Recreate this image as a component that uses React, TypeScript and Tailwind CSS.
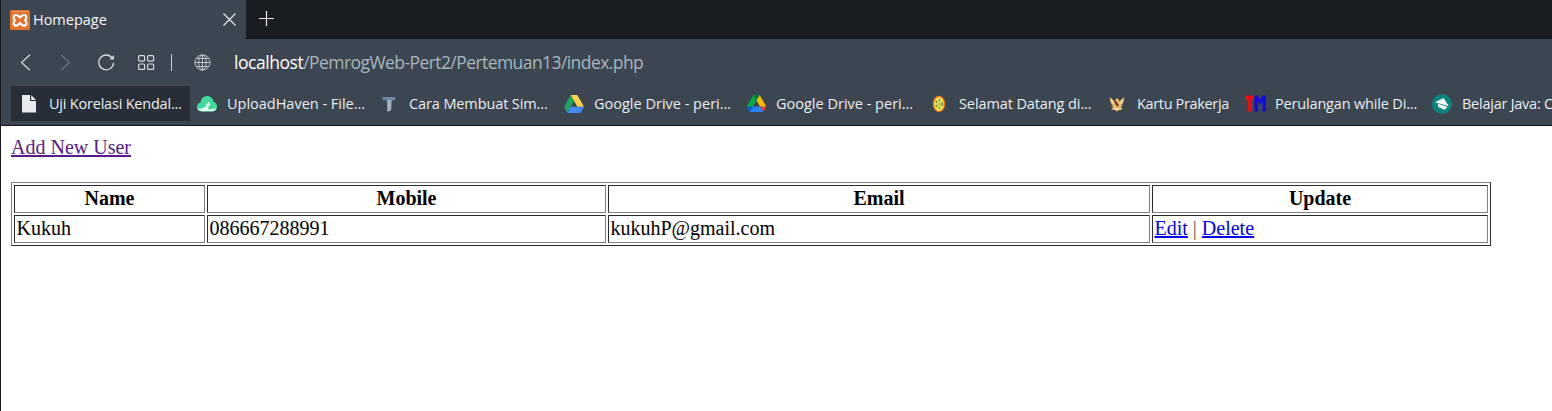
import type { ReactNode } from "react";

function XamppIcon() {
  return (
    <svg width="20" height="20" viewBox="0 0 20 20" fill="none">
      <rect width="20" height="20" rx="1.500" fill="#e2712d" />
      <path d="M2 1.800h16" stroke="#f0a878" strokeWidth=".8" />
      <path d="M6.300 5C4.600 5 3.600 6 3.600 7.400c0 1.200.8 1.800 1.300 2.900-.6 1-1.400 1.600-1.400 2.900 0 1.400 1.100 2.400 2.700 2.400 1.900 0 2.200-1.800 3.800-1.800s1.900 1.800 3.800 1.800c1.600 0 2.700-1 2.700-2.400 0-1.300-.8-1.900-1.400-2.900.5-1.100 1.300-1.700 1.300-2.900C16.400 6 15.400 5 13.700 5 12 5 11.700 6.800 10 6.800S8 5 6.300 5z" stroke="#fff" strokeWidth="2.100" />
      <path d="M10 6v2.800M10 11.800v2.800" stroke="#fff" strokeWidth="1.600" />
    </svg>
  );
}

function FileIcon() {
  return (
    <svg width="16" height="20" viewBox="0 0 16 20" fill="#e6eaec">
      <path d="M1 1h8v6h6v11.500H1zM10.200 1 15 5.900h-4.800z" />
    </svg>
  );
}

function CloudIcon() {
  return (
    <svg width="20" height="18" viewBox="0 0 20 18">
      <path d="M5.500 16.500C2 16.500 0 14.400 0 11.900c0-2.200 1.500-3.900 3.600-4.400C3.800 3.800 6.500 1 10 1c3.300 0 5.900 2.300 6.400 5.500 2.200.8 3.600 2.700 3.600 5 0 3-2 5-5 5z" fill="#3fd99b" />
      <path d="M.4 13.500C4 14.500 7.500 12.500 9.500 10.500l1.300.5c-.8 2 .2 3.500 1.700 3.500 2.600 0 5.500-.5 7-1.400-.7 2-2.300 3.200-4.500 3.200H5.500c-2.600 0-4.400-1-5.100-2.800z" fill="#e8fff5" />
      <path d="m8.500 10 3.300-3.200 2 3.600-1.600-.5-1 3.400-1.700-.2.600-3.300z" fill="#e8fff5" />
    </svg>
  );
}

function LetterTIcon() {
  return (
    <svg width="16" height="18" viewBox="0 0 16 18">
      <path d="M1 1.500h14v4.800h-3.500l-.6 9.700-5 1.500V6.500H1.500z" fill="#33465f" />
      <path d="M1.500 2h12.600v3.300H1.500z" fill="#7288a5" />
      <path d="M6 5h4.600l-.4 10.500-3.900 1.200z" fill="#a5b0ba" />
    </svg>
  );
}

function DriveIcon() {
  return (
    <svg width="20" height="18" viewBox="0 0 20 18">
      <path d="M6.700 0 0 11.700 3.400 18 10.100 6z" fill="#1fa463" />
      <path d="M6.700 0h6.600L20 11.700h-6.700z" fill="#ffcf48" />
      <path d="M6.700 11.700H20L16.600 18H3.400z" fill="#4688f4" />
    </svg>
  );
}

function DriveNewIcon() {
  return (
    <svg width="19" height="17" viewBox="0 0 87.300 78">
      <path d="m6.600 66.850 3.850 6.650c.8 1.400 1.950 2.500 3.300 3.300L27.500 53H0c0 1.550.4 3.100 1.200 4.500z" fill="#0066da" />
      <path d="M43.650 25 29.900 1.200c-1.350.8-2.500 1.900-3.300 3.300L1.200 48.500C.4 49.900 0 51.450 0 53h27.500z" fill="#00ac47" />
      <path d="M73.550 76.800c1.350-.8 2.500-1.900 3.300-3.300l1.600-2.750L86.100 57.500c.8-1.400 1.200-2.950 1.200-4.500H59.800l5.850 11.500z" fill="#ea4335" />
      <path d="M43.650 25 57.400 1.200C56.050.4 54.500 0 52.900 0H34.400c-1.600 0-3.150.45-4.500 1.200z" fill="#00832d" />
      <path d="M59.800 53H27.500L13.750 76.800c1.350.8 2.900 1.200 4.500 1.200h50.800c1.600 0 3.150-.45 4.500-1.200z" fill="#2684fc" />
      <path d="M73.400 26.500 60.700 4.500c-.8-1.400-1.950-2.500-3.300-3.300L43.650 25 59.800 53h27.450c0-1.550-.4-3.100-1.200-4.500z" fill="#ffba00" />
    </svg>
  );
}

function CrestIcon() {
  return (
    <svg width="14" height="18" viewBox="0 0 14 18">
      <ellipse cx="7" cy="9" rx="5.500" ry="7.500" fill="#fff04a" stroke="#f2781f" strokeWidth="1.300" />
      <ellipse cx="7" cy="9" rx="3.200" ry="4.200" fill="#d8e35a" stroke="#53613c" strokeWidth="1.200" strokeDasharray="2 2.200" />
      <path d="M7 7v4M5.500 9h3" stroke="#a9b340" />
    </svg>
  );
}

function GarudaIcon() {
  return (
    <svg width="16" height="16" viewBox="0 0 16 16">
      <path d="M.8 1c0 3.800.9 6.800 3.200 8.300l-2 .3 2.400 1.400-2.400 2.300 3.200.2L8 15.500l2.800-2 3.200-.2-2.400-2.300L14 9.600l-2-.3c2.300-1.500 3.200-4.500 3.200-8.300L10.500 5.300 9.300 3 7 2.200l-.4 1.600L5.500 5.300z" fill="#e6bd70" />
      <path d="m5 5.300 1.700-.8L9.800 9.300 9 10.800 6.800 9z" fill="#7c3022" />
      <path d="M2.300 3.500 4.500 8m9.200-4.500L11.500 8M4 13.200h8" stroke="#f8e6b8" strokeWidth="1" />
    </svg>
  );
}

function TwoLetterIcon() {
  return (
    <svg width="21" height="17" viewBox="0 0 21 17">
      <path d="M0 .5h9v4H7v12H3v-12H0z" fill="#f00c12" />
      <path d="M9.500 16.500V.500h3l2.700 4 2.800-4h3v16h-3.500V6l-2.300 3.500L13 6v10.500z" fill="#1408e8" />
    </svg>
  );
}

function GraduationIcon() {
  return (
    <svg width="20" height="20" viewBox="0 0 20 20">
      <circle cx="10" cy="10" r="10" fill="#0b837e" />
      <path d="M3 8.200 11.500 4l5.300 8.200z" fill="#fff" />
      <path d="m6 9.800 9.500 3.200-3.200 2.700-6-2.700z" fill="#fff" />
    </svg>
  );
}

type Bookmark = { label: string; icon: ReactNode; box: string; tracking: string };

const bookmarks: Bookmark[] = [
  { label: "Uji Korelasi Kendal...", icon: <FileIcon />, box: "w-[179px] mr-[-1px] bg-[#272e37]", tracking: "tracking-[-0.21px]" },
  { label: "UploadHaven - File...", icon: <CloudIcon />, box: "w-[182px]", tracking: "tracking-[-0.01px]" },
  { label: "Cara Membuat Sim...", icon: <LetterTIcon />, box: "w-[185px]", tracking: "tracking-[-0.11px]" },
  { label: "Google Drive - peri...", icon: <DriveIcon />, box: "w-[182px]", tracking: "tracking-[0px]" },
  { label: "Google Drive - peri...", icon: <DriveNewIcon />, box: "w-[183px]", tracking: "tracking-[0px]" },
  { label: "Selamat Datang di...", icon: <CrestIcon />, box: "w-[178px]", tracking: "tracking-[-0.1px]" },
  { label: "Kartu Prakerja", icon: <GarudaIcon />, box: "w-[138px]", tracking: "tracking-[-0.35px]" },
  { label: "Perulangan while Di...", icon: <TwoLetterIcon />, box: "w-[187px]", tracking: "tracking-[-0.17px]" },
  { label: "Belajar Java: C", icon: <GraduationIcon />, box: "w-[180px]", tracking: "tracking-[-0.25px]" },
];

function TabStrip() {
  return (
    <div className="flex h-[39px] bg-[#191d22]">
      <div className="flex w-[245px] items-center rounded-br-[2px] bg-[#3b4650] pl-[9px]">
        <XamppIcon />
        <span className="ml-[3px] text-[14.500px] tracking-[-0.020px] text-[#f4f6f7]">Homepage</span>
        <svg className="mr-[10px] ml-auto" width="13" height="13" viewBox="0 0 13 13" stroke="#e3e7ea" strokeWidth="1.200">
          <path d="m.5.500 12 12m0-12-12 12" />
        </svg>
      </div>
      <svg className="mt-[11px] ml-[13px]" width="15" height="15" viewBox="0 0 15 15" stroke="#e8eaec" strokeWidth="1.200">
        <path d="M7.500 0v15M0 7.500h15" />
      </svg>
    </div>
  );
}

function AddressBar() {
  return (
    <div className="flex h-[47px] items-center pl-[19px] text-[#d5dadd]">
      <svg width="11" height="17" viewBox="0 0 11 17" fill="none" stroke="currentColor" strokeWidth="1.200">
        <path d="M10 .7 1.500 8.500l8.500 7.800" />
      </svg>
      <svg className="ml-[29px] text-[#69747d]" width="11" height="17" viewBox="0 0 11 17" fill="none" stroke="currentColor" strokeWidth="1.200">
        <path d="M1 .7 9.500 8.500 1 16.300" />
      </svg>
      <svg className="ml-[27px]" width="17" height="17" viewBox="0 0 17 17" fill="none" stroke="currentColor" strokeWidth="1.300">
        <path d="M15.600 8.700A7.400 7.400 0 1 1 14 3.800" />
        <path d="M11.500 5.500H16V1z" fill="currentColor" stroke="none" />
      </svg>
      <svg className="ml-[23px]" width="17" height="16" viewBox="0 0 17 16" fill="none" stroke="currentColor" strokeWidth="1.200">
        <rect x=".6" y=".7" width="6" height="5.400" rx="1" />
        <rect x="9.600" y=".7" width="6" height="5.400" rx="1" />
        <rect x=".6" y="9" width="6" height="5.400" rx="1" />
        <rect x="9.600" y="9" width="6" height="5.400" rx="1" />
      </svg>
      <span className="ml-[16px] h-[17px] w-px bg-[#c9cfd3]" />
      <svg className="ml-[22px] text-[#bec6cb]" width="17" height="17" viewBox="0 0 17 17" fill="none" stroke="currentColor" strokeWidth="1">
        <circle cx="8.500" cy="8.500" r="7.600" />
        <ellipse cx="8.500" cy="8.500" rx="3.800" ry="7.600" />
        <path d="M8.500 1v15M1 8.500h15M2.200 4.500h12.600M2.200 12.500h12.600" />
      </svg>
      <span className="ml-[23px] text-[17.500px] tracking-[-0.570px] whitespace-nowrap text-[#aab5be]">
        <span className="tracking-[-0.450px] text-white">localhost</span>/PemrogWeb-Pert2/Pertemuan13/index.php
      </span>
    </div>
  );
}

function BookmarkBar() {
  return (
    <div className="flex h-[39px] overflow-hidden pl-[10px]">
      {bookmarks.map((b, i) => (
        <div key={i} className={`flex h-[35px] shrink-0 items-center ${b.box}`}>
          <span className="flex w-9 shrink-0 justify-center">{b.icon}</span>
          <span className={`ml-[2px] text-[14.500px] whitespace-nowrap text-[#e9edf0] ${b.tracking}`}>{b.label}</span>
        </div>
      ))}
    </div>
  );
}

const th = "h-[28px] border border-t-[#2c2c2c] border-r-[#808080] border-b-[#808080] border-l-[#2c2c2c] p-0 pb-[2px] text-center leading-[24px] font-bold";
const td = "h-[28px] border border-t-[#2c2c2c] border-r-[#808080] border-b-[#808080] border-l-[#2c2c2c] p-0 pb-[2px] pl-[1.500px] leading-[24px]";

function Page() {
  return (
    <main className="flex-1 bg-white pt-[9px] pl-[10px] font-['Liberation_Serif',serif] text-[20px] leading-[24px] text-black">
      <a href="#add" className="block w-fit text-[#551a8b] underline">Add New User</a>
      <table className="mt-[23px] w-[1480px] table-fixed border-separate border-spacing-[2px] border border-t-[#808080] border-r-[#2c2c2c] border-b-[#2c2c2c] border-l-[#808080]">
        <colgroup>
          <col className="w-[191px]" />
          <col className="w-[399px]" />
          <col className="w-[542px]" />
          <col className="w-[336px]" />
        </colgroup>
        <thead>
          <tr>
            <th className={th}>Name</th>
            <th className={th}>Mobile</th>
            <th className={th}>Email</th>
            <th className={th}>Update</th>
          </tr>
        </thead>
        <tbody>
          <tr>
            <td className={td}>Kukuh</td>
            <td className={td}>086667288991</td>
            <td className={td}>kukuhP@gmail.com</td>
            <td className={td}>
              <a href="#edit" className="text-[#0000ee] underline">Edit</a> <span className="text-[#555]">|</span> <a href="#delete" className="text-[#0000ee] underline">Delete</a>
            </td>
          </tr>
        </tbody>
      </table>
    </main>
  );
}

export default function App() {
  return (
    <div className="flex h-[411px] w-[1552px] flex-col overflow-hidden border-l border-[#14171b] bg-white">
      <header className="h-[126px] shrink-0 border-b border-[#14171b] bg-[#3b4650] font-['Open_Sans','Noto_Sans',sans-serif]">
        <TabStrip />
        <AddressBar />
        <BookmarkBar />
      </header>
      <Page />
    </div>
  );
}
